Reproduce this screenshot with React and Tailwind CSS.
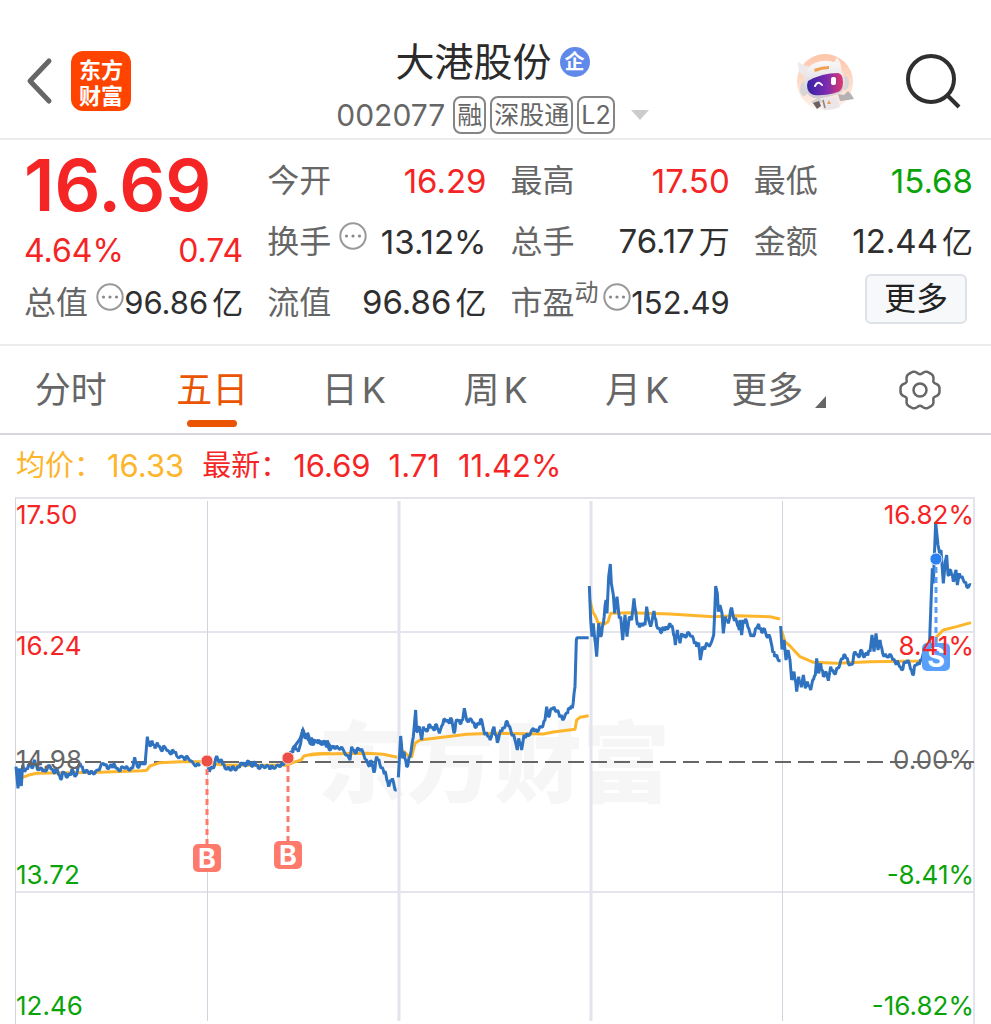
import { useState } from "react";

const stats = [
  { label: "今开", value: "16.29", color: "text-[#f52525]" },
  { label: "最高", value: "17.50", color: "text-[#f52525]" },
  { label: "最低", value: "15.68", color: "text-[#0aa30a]" },
  { label: "换手", value: "13.12%", color: "text-[#2f2f2f]", info: true },
  { label: "总手", value: "76.17", unit: "万", color: "text-[#2f2f2f]" },
  { label: "金额", value: "12.44", unit: "亿", color: "text-[#2f2f2f]" },
  { label: "总值", value: "96.86", unit: "亿", color: "text-[#2f2f2f]", info: true, small: true },
  { label: "流值", value: "96.86", unit: "亿", color: "text-[#2f2f2f]" },
  { label: "市盈", sup: "动", value: "152.49", color: "text-[#2f2f2f]", info: true, small: true },
];

const tabs = [
  { name: "分时" },
  { name: "五日" },
  { name: "日", suffix: "K" },
  { name: "周", suffix: "K" },
  { name: "月", suffix: "K" },
  { name: "更多", menu: true },
];

// each trace: [origin x, origin y, points in thirds of a unit]
const priceTraces = [
  [0, 203, "48,200 54,265 58,205 64,258 68,195 74,215 80,205 88,195 96,205 104,180 112,208 125,205 135,215 150,198 160,215 172,210 182,238 190,215 198,230 210,222 218,210 225,230 240,190 250,215 262,212 280,222 292,210 310,190 322,205 335,195 345,198 355,210 370,202 385,208 398,205 404,172 412,200 425,190 435,195 442,110 450,140 456,122 465,145 472,128 482,148 495,142 510,160 520,152 530,168 550,172 565,175 580,190 600,198"],
  [0, 203, "622,190 628,215 634,200 640,205 650,168 656,185 665,180 675,205 690,210 700,200 705,210 715,200 725,190 735,198 745,182 755,200 765,185 775,205 790,200 805,198 820,205 835,195 850,195 862,170 875,155 885,140 895,155 902,130 908,88 915,115 922,110 930,130 945,122 960,130 975,125 985,130 992,140"],
  [300, 143, "25,295 35,310 50,305 65,312 75,305 88,330 100,318 115,325 130,330 150,360 155,320 165,338 175,325 190,340 205,375 215,365 222,398 230,350 240,375 250,390 258,405 266,440 272,420 280,425 285,450 290,450"],
  [300, 143, "295,412 302,288 308,355 312,335 320,380 330,350 340,290 347,210 350,275 358,260 365,300 370,260 380,275 390,255 400,268 410,255 418,280 425,258 435,238 445,245 455,238 462,280 470,238 480,250 488,240 493,205 500,240 515,240 525,262 535,250 545,240 552,275 562,285 570,300 582,260 592,308 602,270 612,265 622,245 632,270 645,300 652,330 656,295 665,330 672,285 685,288 700,265 710,275 725,262 735,240 740,200 745,230 755,205 765,210 775,215 788,240 800,218 808,205 817,205 825,140 829,0 831,-7 866,-7"],
  [570, 43, "58,138 62,240 66,290 70,250 80,350 86,250 92,290 100,250 108,180 111,220 116,110 121,72 124,130 130,165 134,220 141,170 148,235 152,230 158,300 165,225 171,290 178,230 185,240 192,175 200,240 208,262 215,250 225,255 230,200 236,240 242,260 252,213 260,258 272,278 280,262 292,268 300,250 308,265 316,315 322,270 330,310 335,280 345,292 358,280 370,295 380,320 386,308 391,360 398,320 404,328 410,308 418,320 425,305 431,285 434,220 437,138 442,160 445,215 450,195 456,220 460,280 466,230 475,250 485,203 490,230 500,245 508,270 510,240 515,285 520,240 530,245 540,280 550,290 560,265 566,252 575,278 583,265 590,290 600,292 606,320 614,350 620,345 625,362 632,362"],
  [770, -7, "32,408 36,478 42,450 48,510 54,480 60,510 65,570 72,545 80,605 86,560 94,592 100,555 106,595 112,575 122,600 128,570 136,555 140,505 146,550 152,520 160,560 168,545 175,572 182,530 192,550 205,535 215,505 225,495 235,520 245,525 255,485 265,500 275,480 280,500 290,490 300,485 306,435 312,485 318,430 324,480 330,450 338,490 350,500 365,500 375,515 385,520 395,540 405,515 418,520 428,555 436,525 445,520 455,510 462,480 470,500 478,490 480,420 487,235 490,280 497,97 504,165 509,190 513,180 520,280 526,215 530,195 534,255 542,240 550,275 558,240 562,285 568,250 580,270 590,290 603,285"],
];

const averageTraces = [
  [0, 203, "68,232 90,224 110,220 300,217 425,212 440,211 450,198 480,188 540,185 610,185"],
  [0, 203, "625,190 680,196 860,196 880,187 903,180 912,168 940,162 990,160"],
  [300, 143, "30,345 60,342 200,340 250,343 292,352"],
  [300, 143, "300,350 312,335 322,345 335,350 345,310 360,300 440,290 500,283 580,280 730,282 760,276 825,268 830,240 840,232 866,227"],
  [570, 43, "60,180 68,215 76,228 84,248 104,252 114,245 122,220 180,218 300,222 430,230 500,227 600,230 630,237"],
  [770, -7, "34,420 45,455 60,468 90,500 130,517 200,520 300,515 450,513 485,510 495,480 500,440 520,420 560,410 603,398"],
];

const axisLabels = [
  { y: 27, left: "17.50", right: "16.82%", fill: "#f52525" },
  { y: 158, left: "16.24", right: "8.41%", fill: "#f52525" },
  { y: 272, left: "14.98", right: "0.00%", fill: "#666666" },
  { y: 387, left: "13.72", right: "-8.41%", fill: "#0aa30a" },
  { y: 518, left: "12.46", right: "-16.82%", fill: "#0aa30a" },
];

const marks = [
  { x: 207, y: 264, box: 347, text: "B", fill: "#fd7a6c", dot: "#ec4f45", ring: "#ffd9d5" },
  { x: 288, y: 261, box: 344, text: "B", fill: "#fd7a6c", dot: "#ec4f45", ring: "#ffd9d5" },
  { x: 936, y: 62, box: 146, text: "S", fill: "#5a9ffa", dot: "#2a80f0", ring: "#d5e6ff" },
];

const toPoints = ([ox, oy, raw]) =>
  raw.split(" ").map((pair) => {
    const [x, y] = pair.split(",").map(Number);
    return [ox + x / 3, oy + y / 3];
  });

const toLine = (trace) => "M" + toPoints(trace).map((p) => p.join(" ")).join("L");

// adds a small tick between two quotes so the line looks traded
const toTickLine = (trace) => {
  const pts = toPoints(trace);
  const ticks = [1, 2.2, 0.6, 1.6, 2.6];
  const out = [];
  pts.forEach(([x, y], i) => {
    out.push(`${x} ${y}`);
    const next = pts[i + 1];
    if (next && next[0] - x > 2.6 && next[0] - x < 8) {
      const dx = (next[0] - x) / 3;
      const dy = (next[1] - y) / 3;
      out.push(`${x + dx} ${y + dy + ticks[i % 5]}`);
      out.push(`${x + dx * 2} ${y + dy * 2 - ticks[(i + 2) % 5]}`);
    }
  });
  return "M" + out.join("L");
};

// six rounded lobes with narrower dips between them
const gearPath = () => {
  const pts = [];
  for (let i = 0; i < 120; i++) {
    const a = (i * Math.PI) / 60;
    const r = 18.2 + 1.9 * Math.cos(6 * a) - 0.6 * Math.cos(12 * a);
    pts.push(`${21 + r * Math.cos(a)} ${21 + r * Math.sin(a)}`);
  }
  return "M" + pts.join("L") + "Z";
};

const InfoIcon = () => (
  <svg viewBox="0 0 28 28" className="h-7 w-7 shrink-0" fill="none" aria-hidden="true">
    <circle cx="14" cy="14" r="12.7" stroke="#999999" strokeWidth="2" />
    <circle cx="7.5" cy="14" r="1.6" fill="#888888" />
    <circle cx="14" cy="14" r="1.6" fill="#888888" />
    <circle cx="20.5" cy="14" r="1.6" fill="#888888" />
  </svg>
);

const RobotIcon = () => (
  <svg viewBox="0 0 60 60" className="h-[60px] w-[60px]" aria-hidden="true">
    <defs>
      <linearGradient id="halo" x1="0" y1="0" x2="0" y2="1">
        <stop offset="0" stopColor="#fdc5a8" />
        <stop offset="1" stopColor="#fff1ea" />
      </linearGradient>
      <linearGradient id="visor" x1="0" y1="0" x2="1" y2="0">
        <stop offset="0" stopColor="#3524a4" />
        <stop offset="0.55" stopColor="#7c2bb0" />
        <stop offset="1" stopColor="#e0396b" />
      </linearGradient>
      <linearGradient id="shell" x1="0" y1="0" x2="0" y2="1">
        <stop offset="0" stopColor="#fbfafa" />
        <stop offset="1" stopColor="#cfcbd0" />
      </linearGradient>
    </defs>
    <circle cx="30" cy="30" r="28" fill="url(#halo)" />
    <path d="M24 45l-8 5 4 3 8-3z" fill="#d6d0d2" />
    <path d="M18 51l6-2 2 5-4 3z" fill="#6b5f60" />
    <path d="M26 45h16l3 10q-8 4-17 3z" fill="#ebe7e9" />
    <path d="M28 48l2 8" stroke="#8b8487" strokeWidth="1.5" fill="none" />
    <path d="M34 48l-2 4h4z" fill="#ee9a5c" />
    <path d="M43 42l6 1 4-4 3 3 3 5-6 1-8 1z" fill="#b5b1b5" />
    <path d="M3 9q-1 9 5 15l6-10q-7 0-11-5z" fill="#eeeaec" />
    <path d="M41 5q6 5 5 14l-9-8q5-2 4-6z" fill="#f5f2f3" />
    <ellipse cx="9" cy="37" rx="4" ry="7" fill="#d9d4d7" />
    <ellipse cx="50" cy="31" rx="4" ry="7" fill="#d9d4d7" />
    <path d="M9 25Q12 11 27 9Q42 7 47 19Q53 33 47 40Q32 47 19 46Q10 43 9 33z" fill="url(#shell)" />
    <path d="M19 17q8-3 15-3v3q-7 0-14 3z" fill="#efa04e" />
    <path d="M13 29Q27 21 43 21Q48 22 48 30Q48 38 43 40Q30 44 19 43Q12 41 12 33z" fill="url(#visor)" />
    <path d="M20 34q3-6 7-1" stroke="#ffffff" strokeWidth="2" fill="none" strokeLinecap="round" />
    <rect x="36" y="25" width="5" height="8" rx="2" fill="#ffffff" />
  </svg>
);

const Tag = ({ children }) => (
  <span className="rounded-lg border-2 border-[#858585] px-[2px] text-[25px] leading-[34px]">{children}</span>
);

const Header = () => (
  <header className="grid grid-cols-[1fr_auto_1fr] items-end border-b-2 border-[#ececec] pt-10 pr-[30px] pl-6">
    <div className="flex items-center gap-4 pb-[27px]">
      <button aria-label="返回">
        <svg viewBox="0 0 31 48" className="h-12 w-[31px]" fill="none">
          <path d="M25 4L6 24l19 20" stroke="#666666" strokeWidth="5" strokeLinecap="round" strokeLinejoin="round" />
        </svg>
      </button>
      <a
        href="#home"
        className="flex h-[60px] w-[60px] flex-col items-center justify-center rounded-xl bg-[#ff4400] font-['Noto_Sans_CJK_SC',sans-serif] text-[22px] leading-[26px] font-bold text-white"
      >
        <span>东方</span>
        <span>财富</span>
      </a>
    </div>

    <div className="flex flex-col items-center">
      <div className="flex items-center gap-2">
        <h1 className="text-[39px] leading-[44px] text-[#2b2b2b]">大港股份</h1>
        <span className="flex h-[30px] w-[30px] items-center justify-center rounded-full bg-[#6189ea] text-[20px] leading-[30px] font-bold text-white">
          企
        </span>
      </div>
      <div className="flex items-center gap-1 pt-[10px] pb-[2px] text-[#666666]">
        <span className="pr-1 text-[30px] leading-[42px]">002077</span>
        <Tag>融</Tag>
        <Tag>深股通</Tag>
        <Tag>L2</Tag>
        <svg viewBox="0 0 18 10" className="ml-3 h-[10px] w-[18px]" aria-hidden="true">
          <path d="M0 0h18l-9 10z" fill="#cccccc" />
        </svg>
      </div>
    </div>

    <div className="flex items-center justify-end gap-[50px] pb-[26px]">
      <button aria-label="助手">
        <RobotIcon />
      </button>
      <button aria-label="搜索">
        <svg viewBox="0 0 56 56" className="h-14 w-14" fill="none" stroke="#2f2f2f" strokeWidth="4">
          <circle cx="26" cy="25" r="23" />
          <path d="M42 41l12 12" />
        </svg>
      </button>
    </div>
  </header>
);

const Stat = ({ label, sup, value, unit, color, info, small }) => (
  <div className="flex items-center justify-between whitespace-nowrap">
    <span className="flex items-center text-[#666666]">
      {label}
      {sup && <span className="mb-5 text-2xl leading-6">{sup}</span>}
      {info && (
        <span className={sup ? "mb-3 ml-1" : "mb-3 ml-2"}>
          <InfoIcon />
        </span>
      )}
    </span>
    <span className={`flex items-baseline gap-1 ${color}`}>
      <span className={small ? "text-[31px]" : "text-[33px]"}>{value}</span>
      {unit && <span className="text-[31px]">{unit}</span>}
    </span>
  </div>
);

const Quote = () => (
  <section className="grid auto-rows-[61px] grid-cols-4 gap-x-6 border-b-2 border-[#ececec] pt-[10px] pr-[18px] pb-[11px] pl-6 text-[32px] leading-10">
    <div className="row-span-2 flex flex-col text-[#f52525]">
      <div className="text-[72px] leading-[70px] font-semibold">16.69</div>
      <div className="mt-[11px] flex justify-between">
        <span>4.64%</span>
        <span>0.74</span>
      </div>
    </div>
    {stats.map((s) => (
      <Stat key={s.label} {...s} />
    ))}
    <div className="flex items-start justify-end pt-[2px] pr-[6px]">
      <button className="rounded-md border-2 border-[#dfe1e8] bg-[#f7f8fa] px-[17px] py-[3px] text-[#222222]">更多</button>
    </div>
  </section>
);

const Chart = () => (
  <svg viewBox="0 0 991 527" className="block h-auto w-full" fill="none" role="img" aria-label="五日走势">
    <text x="318" y="298" fontSize="88" fontWeight="900" fill="#f6f6f6">东方财富</text>

    {/* grid */}
    <g stroke="#e4e4ec">
      <path d="M15 1H975M16 135H974M16 395H974M974 1V527" strokeWidth="2" />
      <path d="M399 4V524M591 4V524" strokeWidth="3" />
    </g>
    <path d="M15.5 1V527M207.5 4V524M782.5 4V524" stroke="#d4d4de" strokeWidth="1" />
    <path d="M16 265H974" stroke="#666666" strokeWidth="2" strokeDasharray="16 7" />

    {averageTraces.map((t, i) => (
      <path key={i} d={toLine(t)} stroke="#fdb52b" strokeWidth="3" strokeLinejoin="round" />
    ))}
    {priceTraces.map((t, i) => (
      <path key={i} d={toTickLine(t)} stroke="#2f72bf" strokeWidth="3" strokeLinejoin="bevel" />
    ))}
    <path d="M292 253L300 242L303 233L305 238L308 237L310 243L313 241" stroke="#2f72bf" strokeWidth="3" />

    {/* buy and sell marks */}
    {marks.map((m) => (
      <g key={m.x}>
        <path d={`M${m.x} ${m.y + 8}V${m.box}`} stroke={m.fill} strokeWidth="3" strokeDasharray="6 4" />
        <circle cx={m.x} cy={m.y} r="6" fill={m.dot} stroke={m.ring} />
        <rect x={m.x - 14} y={m.box} width="28" height="28" rx="5" fill={m.fill} />
        <text x={m.x} y={m.box + 24} fontSize="27" fontWeight="700" fill="#ffffff" textAnchor="middle">{m.text}</text>
      </g>
    ))}

    {axisLabels.map((l) => (
      <g key={l.y} fill={l.fill} fontSize="26">
        <text x="16" y={l.y}>{l.left}</text>
        <text x="974" y={l.y} textAnchor="end">{l.right}</text>
      </g>
    ))}
  </svg>
);

const App = () => {
  const [active, setActive] = useState("五日");

  return (
    <main className="min-h-screen bg-white font-['Inter','Noto_Sans_CJK_SC',sans-serif]">
      <Header />
      <Quote />

      <nav className="grid grid-cols-7 border-b-2 border-[#d6d6de]">
        {tabs.map((tab) => (
          <button
            key={tab.name}
            onClick={() => setActive(tab.name)}
            className={`flex flex-col items-center pt-[22px] text-4xl leading-[44px] ${
              active === tab.name ? "text-[#ea5504]" : "text-[#666666]"
            }`}
          >
            <span className="flex items-end">
              {tab.name}
              {tab.suffix && <span className="ml-1">{tab.suffix}</span>}
              {tab.menu && (
                <svg viewBox="0 0 11 12" className="mb-1 ml-3 h-3 w-[11px]" aria-hidden="true">
                  <path d="M11 0v12H0z" fill="#666666" />
                </svg>
              )}
            </span>
            <span
              className={`mt-2 mb-[6px] h-[7px] w-[50px] rounded-full ${active === tab.name ? "bg-[#ea5504]" : ""}`}
            />
          </button>
        ))}
        <button aria-label="设置" className="flex items-center justify-center">
          <svg viewBox="0 0 42 42" className="h-[42px] w-[42px]" fill="none" stroke="#666666" strokeWidth="2.5">
            <path d={gearPath()} />
            <circle cx="21" cy="21" r="6.5" />
          </svg>
        </button>
      </nav>

      <div className="flex gap-[18px] px-4 text-[31px] leading-[62px] text-[#f52525]">
        <span className="flex gap-1 text-[#fdb52b]">
          <span className="text-[29px]">均价：</span>16.33
        </span>
        <span className="flex gap-1">
          <span className="text-[29px]">最新：</span>16.69
        </span>
        <span>1.71</span>
        <span>11.42%</span>
      </div>

      <Chart />
    </main>
  );
};

export default App;
